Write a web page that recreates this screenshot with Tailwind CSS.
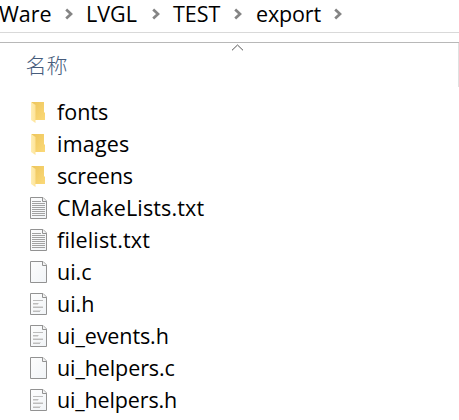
<!DOCTYPE html>
<html lang="zh">
<head>
<meta charset="utf-8">
<title>export</title>
<script src="https://cdn.jsdelivr.net/npm/@tailwindcss/browser@4"></script>
</head>
<body class="w-[459px] h-[420px] overflow-hidden bg-white text-black font-['Open_Sans','Noto_Sans_CJK_SC',sans-serif] text-[21.5px]">
<svg class="absolute size-0">
  <defs>
    <linearGradient id="flap" x1="0" x2="1"><stop offset="0" stop-color="#ffeeb4"/><stop offset="1" stop-color="#fde398"/></linearGradient>
    <linearGradient id="back" x1="0" x2="1" y1="0" y2="1"><stop offset="0" stop-color="#edc55c"/><stop offset="1" stop-color="#fbd978"/></linearGradient>
    <linearGradient id="paper" x1="0" x2="1" y1="0" y2="1"><stop offset="0" stop-color="#fdfdfd"/><stop offset="1" stop-color="#f1f4f7"/></linearGradient>
    <symbol id="folder" viewBox="0 0 18 22">
      <path d="M1.5 1H14V11l1 1V19H1.5Z" fill="url(#back)"/>
      <path d="M1 1 5.5 4V22L1 19Z" fill="url(#flap)"/>
    </symbol>
    <symbol id="page" viewBox="0 0 18 22">
      <path d="M.5 .5H13L16.5 4V21.5H.5Z" fill="url(#paper)" stroke="#929292"/>
      <path d="M12.5 .5V4.5H16.5" fill="#f4f4f4" stroke="#929292"/>
    </symbol>
    <symbol id="text" viewBox="0 0 18 22">
      <use href="#page"/>
      <path d="M2 4.5h9M2 6.5h13M2 8.5h13M2 10.5h13M2 12.5h13M2 14.5h13M2 16.5h13M2 18.5h13" stroke="#a2a2a2"/>
    </symbol>
    <symbol id="header" viewBox="0 0 18 22">
      <use href="#page"/>
      <path d="M3 7.5h10M3 10.5h5M3 14.5h10M3 18.5h7" stroke="#bcbcbc"/>
      <path d="M8 10.5h1M3 11.5h5M3 13.5h10M3 17.5h8" stroke="#dcdcdc"/>
    </symbol>
    <symbol id="chev" viewBox="0 0 8 12"><path d="M1.2 1.5 6 6 1.2 10.5" fill="none" stroke="#858585" stroke-width="2.7"/></symbol>
  </defs>
</svg>
<nav class="h-[33px] border-b border-[#d9d9d9] flex items-start leading-[27px]">
  <span class="w-[65px] whitespace-nowrap"><span class="-ml-px">Ware</span></span>
  <svg class="w-2 h-3 mt-[8px] shrink-0"><use href="#chev"/></svg>
  <span class="ml-[13px] w-[66px]">LVGL</span>
  <svg class="w-2 h-3 mt-[8px] shrink-0"><use href="#chev"/></svg>
  <span class="ml-[13px] w-[61px]">TEST</span>
  <svg class="w-2 h-3 mt-[8px] shrink-0"><use href="#chev"/></svg>
  <span class="ml-[14px] w-[78px] tracking-[-0.15px]">export</span>
  <svg class="w-2 h-3 mt-[8px] shrink-0"><use href="#chev"/></svg>
</nav>
<main class="mt-[9px] border-t border-[#b8b8b8]">
  <header class="h-[44px] border-r border-[#e0e0e0] relative pl-[25.5px] pt-[5px] text-[#465c7c] text-[21px] leading-[32px] font-['Noto_Sans_CJK_SC',sans-serif] font-light">名称
    <svg class="absolute left-[231px] top-[1px] w-[13px] h-[7px]" viewBox="0 0 13 7"><path d="M1 6.3 6.5 1 12 6.3" fill="none" stroke="#555"/></svg>
  </header>
  <ul class="mt-[9px] [&>li]:h-8 [&>li]:flex [&>li]:items-center [&>li]:pl-[30px] [&>li]:gap-[9px] [&_svg]:w-[18px] [&_svg]:h-[22px] [&>li]:leading-8 [&>li]:whitespace-nowrap">
    <li><svg><use href="#folder"/></svg><span>fonts</span></li>
    <li><svg><use href="#folder"/></svg><span class="tracking-[0.2px]">images</span></li>
    <li><svg><use href="#folder"/></svg><span class="tracking-[-0.15px]">screens</span></li>
    <li><svg><use href="#text"/></svg><span class="tracking-[0.15px]">CMakeLists.txt</span></li>
    <li><svg><use href="#text"/></svg><span class="tracking-[0.15px]">filelist.txt</span></li>
    <li><svg><use href="#page"/></svg><span>ui.c</span></li>
    <li><svg><use href="#header"/></svg><span>ui.h</span></li>
    <li><svg><use href="#header"/></svg><span class="tracking-[-0.1px]">ui_events.h</span></li>
    <li><svg><use href="#page"/></svg><span class="tracking-[-0.1px]">ui_helpers.c</span></li>
    <li><svg><use href="#header"/></svg><span class="tracking-[-0.15px]">ui_helpers.h</span></li>
  </ul>
</main>
</body>
</html>
